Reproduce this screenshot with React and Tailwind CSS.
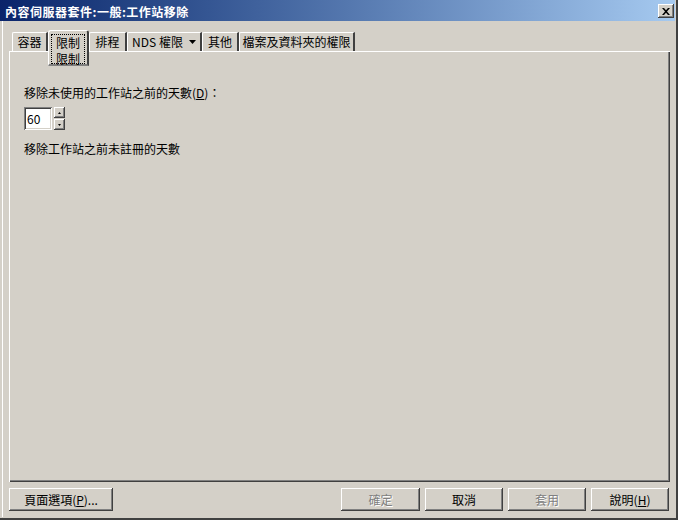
const raised =
  'shadow-[inset_-1px_-1px_0_#404040,inset_1px_1px_0_#ffffff,inset_-2px_-2px_0_#808080,inset_2px_2px_0_#d4d0c8]';
const sunken =
  'shadow-[inset_1px_1px_0_#808080,inset_-1px_-1px_0_#ffffff,inset_2px_2px_0_#404040,inset_-2px_-2px_0_#d4d0c8]';

const Tab = ({ w, children }) => (
  <div
    className={`h-[19px] ${w} flex items-center justify-center rounded-tl-[2px] border-l border-t border-white border-r-2 border-r-[#404040] whitespace-nowrap`}
  >
    {children}
  </div>
);

const Button = ({ w, disabled, children }) => (
  <button
    className={`h-[23px] ${w} ${raised} flex items-center justify-center bg-[#d4d0c8] ${
      disabled ? 'text-[#808080] [text-shadow:1px_1px_0_#ffffff]' : 'text-black'
    }`}
  >
    {children}
  </button>
);

export default function App() {
  return (
    <div className="w-[678px] h-[520px] bg-[#d4d0c8] font-['Noto_Sans_CJK_TC','Noto_Sans',sans-serif] text-[12px] leading-[14px] text-black overflow-hidden">
      <div className="w-[678px] h-[520px] flex flex-col border-r-2 border-b-2 border-r-[#404040] border-b-[#404040] pr-[1px] pb-[1px]">
        {/* title bar */}
        <div className="h-[21px] shrink-0 bg-linear-to-r from-[#0a246a] to-[#a6caf0] flex items-center pl-[5px] pr-[1px]">
          <span className="text-white font-bold text-[12px] pt-[2px] tracking-[0.5px]">
            內容伺服器套件:一般:工作站移除
          </span>
          <div className={`ml-auto mt-[1px] w-[16px] h-[14px] bg-[#d4d0c8] ${raised} flex items-center justify-center`}>
            <svg width="8" height="7" viewBox="0 0 8 7">
              <path d="M0 0h2l2 2.2L6 0h2L5 3.5 8 7H6L4 4.8 2 7H0l3-3.5z" fill="#000" />
            </svg>
          </div>
        </div>

        <div className="flex-1 flex flex-col border-l-[1px] border-[#ffffff] ml-[2px] pl-[6px] pr-[5px]">
          {/* tabs */}
          <div className="mt-[9px] h-[21px] flex items-end pl-[3px] shrink-0">
            <Tab w="w-[36px]">容器</Tab>
            <div className="relative z-10 self-start h-[36px] w-[41px] -ml-[0px] bg-[#d4d0c8] rounded-tl-[3px] rounded-tr-[3px] border-l border-t border-white border-r-2 border-r-[#404040] border-b-2 border-b-[#808080] px-[2px] pt-[3px]">
              <div className="h-[30px] border border-dotted border-black flex flex-col items-center">
                <span className="mt-[1px]">限制</span>
                <span className="mt-[2px]">限制</span>
              </div>
            </div>
            <Tab w="w-[38px]">排程</Tab>
            <Tab w="w-[75px]">
              <span>NDS 權限</span>
              <svg className="ml-[6px]" width="7" height="4" viewBox="0 0 7 4">
                <path d="M0 0h7L3.5 4z" fill="#000" />
              </svg>
            </Tab>
            <Tab w="w-[37px]">其他</Tab>
            <Tab w="w-[116px]">檔案及資料夾的權限</Tab>
          </div>

          {/* panel */}
          <div className="h-[431px] shrink-0 border-l border-t border-white shadow-[inset_-1px_-1px_0_#404040,inset_-2px_-2px_0_#808080] pl-[14px] pt-[34px]">
            <div>
              移除未使用的工作站之前的天數(<span className="underline">D</span>)：
            </div>
            <div className="mt-[7px] flex items-start">
              <div className={`w-[28px] h-[23px] bg-white ${sunken} flex items-center pl-[3px] pt-[1px]`}>60</div>
              <div className="ml-[2px] flex flex-col">
                <div className={`w-[11px] h-[11px] bg-[#d4d0c8] ${raised} flex items-center justify-center`}>
                  <svg width="3" height="2" viewBox="0 0 3 2">
                    <path d="M1.5 0L3 2H0z" fill="#000" />
                  </svg>
                </div>
                <div className={`mt-[1px] w-[11px] h-[11px] bg-[#d4d0c8] ${raised} flex items-center justify-center`}>
                  <svg width="3" height="2" viewBox="0 0 3 2">
                    <path d="M0 0h3L1.5 2z" fill="#000" />
                  </svg>
                </div>
              </div>
            </div>
            <div className="mt-[12px]">移除工作站之前未註冊的天數</div>
          </div>

          {/* buttons */}
          <div className="mt-[6px] flex">
            <Button w="w-[104px]">
              頁面選項(<span className="underline">P</span>)...
            </Button>
            <div className="ml-auto flex gap-[5px] pr-[1px]">
              <Button w="w-[79px]" disabled>確定</Button>
              <Button w="w-[78px]">取消</Button>
              <Button w="w-[78px]" disabled>套用</Button>
              <Button w="w-[78px]">
                說明(<span className="underline">H</span>)
              </Button>
            </div>
          </div>
        </div>
      </div>
    </div>
  );
}
